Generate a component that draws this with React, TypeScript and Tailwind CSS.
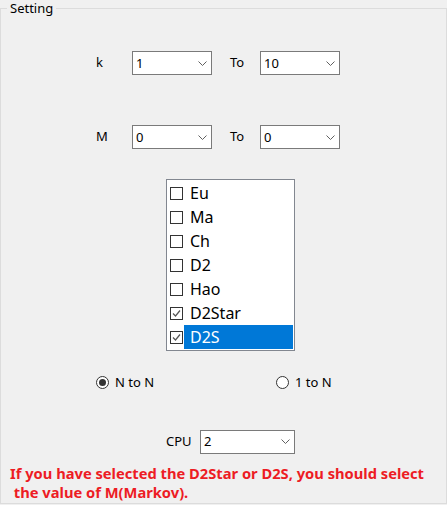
const font = "font-['Segoe_UI','Noto_Sans',sans-serif]"

function Chevron() {
  return (
    <svg width="9" height="5" viewBox="0 0 9 5" className="shrink-0">
      <path d="M0.5 0.5 L4.5 4.5 L8.5 0.5" fill="none" stroke="#606060" strokeWidth="1" />
    </svg>
  )
}

function Combo({ value, width }: { value: string; width: string }) {
  return (
    <div className={`${width} h-[24px] bg-white border border-[#7a7a7a] flex items-center justify-between pl-[3px] pr-[4px]`}>
      <span className="text-[13px] text-black leading-none">{value}</span>
      <Chevron />
    </div>
  )
}

function Check({ checked }: { checked: boolean }) {
  return (
    <div className="w-[13px] h-[13px] border border-[#333] bg-white flex items-center justify-center shrink-0">
      {checked && (
        <svg width="9" height="9" viewBox="0 0 9 9">
          <path d="M1 4.5 L3.5 7 L8 1.5" fill="none" stroke="#555" strokeWidth="1.2" />
        </svg>
      )}
    </div>
  )
}

function Radio({ checked, label }: { checked: boolean; label: string }) {
  return (
    <div className="flex items-center gap-[6px]">
      <div className="w-[13px] h-[13px] rounded-full border border-[#333] bg-white flex items-center justify-center">
        {checked && <div className="w-[7px] h-[7px] rounded-full bg-[#333]" />}
      </div>
      <span className="text-[13px] text-black">{label}</span>
    </div>
  )
}

export default function App() {
  const items = [
    { name: "Eu", checked: false },
    { name: "Ma", checked: false },
    { name: "Ch", checked: false },
    { name: "D2", checked: false },
    { name: "Hao", checked: false },
    { name: "D2Star", checked: true },
    { name: "D2S", checked: true, selected: true },
  ]

  return (
    <div className={`w-[447px] h-[505px] bg-[#f0f0f0] ${font}`}>
      <fieldset className="w-[447px] h-[504px] border border-[#dcdcdc] pt-0">
        <legend className="ml-[6px] px-[3px] text-[13px] leading-[17px] text-black">Setting</legend>

        {/* k row */}
        <div className="flex items-center mt-[34px] pl-[95px]">
          <span className="w-[36px] text-[13px] text-black">k</span>
          <Combo value="1" width="w-[80px]" />
          <span className="w-[48px] pl-[18px] text-[13px] text-black">To</span>
          <Combo value="10" width="w-[80px]" />
        </div>

        {/* M row */}
        <div className="flex items-center mt-[50px] pl-[95px]">
          <span className="w-[36px] text-[13px] text-black">M</span>
          <Combo value="0" width="w-[80px]" />
          <span className="w-[48px] pl-[18px] text-[13px] text-black">To</span>
          <Combo value="0" width="w-[80px]" />
        </div>

        {/* list */}
        <div className="ml-[165px] mt-[30px] w-[129px] h-[172px] bg-white border border-[#828790] py-[1px] pl-[3px] pr-[1px]">
          {items.map((it) => (
            <div key={it.name} className="h-[24px] flex items-center">
              <Check checked={it.checked} />
              <div
                className={`ml-[1px] h-[24px] flex-1 flex items-center pl-[6px] text-[16px] ${
                  it.selected ? "bg-[#0078d7] text-white" : "text-black"
                }`}
              >
                {it.name}
              </div>
            </div>
          ))}
        </div>

        {/* radios */}
        <div className="flex items-center mt-[22px] pl-[95px]">
          <div className="w-[180px]">
            <Radio checked label="N to N" />
          </div>
          <Radio checked={false} label="1 to N" />
        </div>

        {/* cpu */}
        <div className="flex items-center mt-[37px] pl-[165px]">
          <span className="w-[34px] text-[13px] text-black">CPU</span>
          <Combo value="2" width="w-[95px]" />
        </div>

        {/* warning */}
        <p className="mt-[10px] pl-[9px] text-[14.7px] leading-[19px] font-bold text-[#ed1c24] whitespace-nowrap">
          If you have selected the D2Star or D2S, you should select
          <br />
          &nbsp;the value of M(Markov).
        </p>
      </fieldset>
    </div>
  )
}
